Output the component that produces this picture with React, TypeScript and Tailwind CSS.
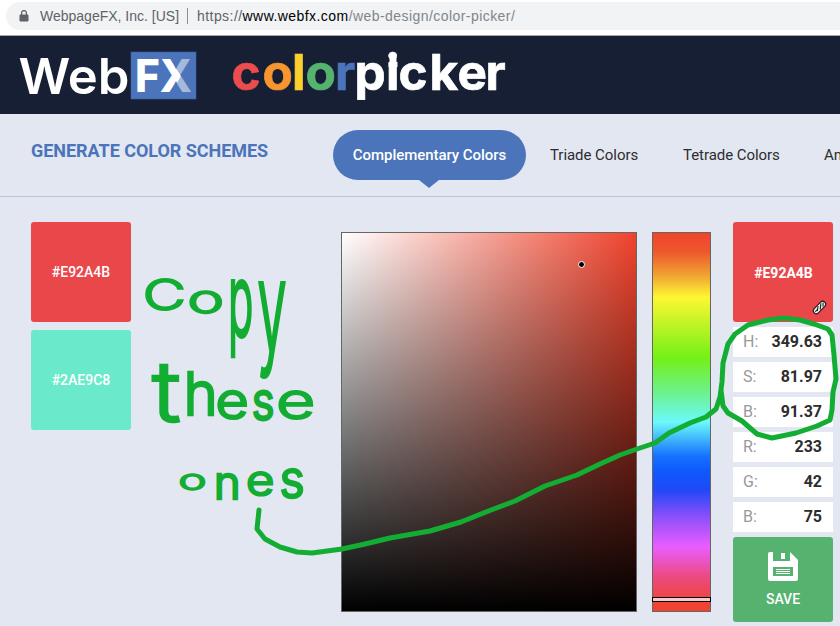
import React from "react";

type Box = [number, number, number, number];

// Ink bounds of each letter in em: left, right, height above baseline, depth below it.
const glyphs: Record<string, Box> = {
  C: [0.07, 0.66, 0.735, -0.01],
  o: [0.06, 0.54, 0.55, -0.01],
  p: [0.09, 0.55, 0.55, -0.2],
  y: [0.03, 0.51, 0.54, -0.2],
  t: [0.02, 0.3, 0.67, -0.0],
  h: [0.09, 0.49, 0.74, 0],
  e: [0.06, 0.53, 0.55, -0.01],
  s: [0.05, 0.46, 0.55, -0.01],
  n: [0.09, 0.49, 0.55, 0],
};

// Each letter with the area it fills: left, right, top, bottom.
const notes: [string, Box][][] = [
  [
    ["C", [147, 182, 280, 311]],
    ["o", [191, 221, 292, 314]],
    ["p", [232, 251, 281, 356]],
    ["y", [259, 284, 284, 376]],
  ],
  [
    ["t", [154, 181, 365, 422]],
    ["h", [189, 212, 371, 415]],
    ["e", [219, 246, 391, 419]],
    ["s", [254, 272, 391, 420]],
    ["e", [280, 312, 391, 419]],
  ],
  [
    ["o", [181, 204, 474, 490]],
    ["n", [218, 236, 474, 499]],
    ["e", [249, 272, 473, 496]],
    ["s", [282, 302, 469, 498]],
  ],
];

function Letter({ ch, box }: { ch: string; box: Box }) {
  const g = glyphs[ch];
  const size = 50;
  const base = 43.2;
  const sx = (box[1] - box[0]) / ((g[1] - g[0]) * size);
  const sy = (box[3] - box[2]) / ((g[2] - g[3]) * size);
  const x = box[0] - g[0] * size * sx;
  const y = box[2] + g[2] * size * sy - base;
  return (
    <span
      className="inline-block w-0 overflow-visible"
      style={{
        transformOrigin: `0 ${base}px`,
        transform: `translate(${x}px, ${y}px) scale(${sx}, ${sy})`,
        WebkitTextStrokeWidth: `${2.6 / Math.max(sx, Math.sqrt(sx * sy))}px`,
      }}
    >
      {ch}
    </span>
  );
}

function Logo() {
  return (
    <svg width="500" height="77" viewBox="15 36 500 77" className="ml-[15px]" fontFamily="Inter, sans-serif">
      <text x="18.5" y="94" fontSize="50" fontWeight="600" fill="#fff" textLength="111" lengthAdjust="spacingAndGlyphs">Web</text>
      <rect x="131" y="52" width="65" height="47" fill="#4b74ba" stroke="#3a62a8" strokeWidth="0.6" />
      <text x="135" y="92.3" fontSize="45" fontWeight="800" fill="#fff" textLength="57" lengthAdjust="spacingAndGlyphs">FX</text>
      <polygon points="170,59 181,76 171,93 195,93 195,59" fill="#4b74ba" opacity="0.5" />
      <text y="90.2" fontSize="49.5" fontWeight="700" strokeWidth="0.7" x="231.5 262.5 292 305.5 335 354.5 386 398.5 429.5 457.5 485.5">
        <tspan fill="#ec4c4e" stroke="#ec4c4e">c</tspan>
        <tspan fill="#f7952f" stroke="#f7952f">o</tspan>
        <tspan fill="#fbd02e" stroke="#fbd02e">l</tspan>
        <tspan fill="#55b36f" stroke="#55b36f">o</tspan>
        <tspan fill="#4b74ba" stroke="#4b74ba">r</tspan>
        <tspan fill="#fff" stroke="#fff">picker</tspan>
      </text>
      <path d="M389.5 65v-6q0-4 3.5-4t3.5 4v3h1v5h-9v-5h1z" fill="#fff" />
    </svg>
  );
}

function Swatch({ color, label, bold }: { color: string; label: string; bold?: boolean }) {
  return (
    <div
      className={`flex h-[100px] w-[100px] shrink-0 items-center justify-center rounded-[3px] text-[14px] text-white ${bold ? "pl-px pt-[2px] font-bold" : "font-medium"}`}
      style={{ backgroundColor: color }}
    >
      {label}
    </div>
  );
}

const values = [
  ["H:", "349.63"],
  ["S:", "81.97"],
  ["B:", "91.37"],
  ["R:", "233"],
  ["G:", "42"],
  ["B:", "75"],
];

export default function App() {
  return (
    <div className="relative flex h-[626px] w-[840px] flex-col overflow-hidden bg-[#e3e7f2] font-['Roboto',sans-serif]">
      <div className="h-9 border-b border-[#a6a8ac] bg-white pl-[6px] pt-[2px]">
        <div className="flex h-7 w-[860px] items-center rounded-full bg-[#f1f3f4] pl-[13px] font-['Liberation_Sans',sans-serif] text-[14px] text-[#5f6368]">
          <svg width="10" height="12" viewBox="0 0 10 12">
            <path d="M1 5h8v6H1z" fill="#5f6368" stroke="#5f6368" strokeLinejoin="round" />
            <path d="M2.6 5V3a2.4 2.4 0 0 1 4.8 0v2" fill="none" stroke="#5f6368" strokeWidth="1.3" />
          </svg>
          <span className="ml-[11px] w-[140px] whitespace-nowrap">WebpageFX, Inc. [US]</span>
          <span className="ml-[7px] h-4 w-px bg-[#8b8e92]" />
          <span className="ml-[9px] whitespace-nowrap tracking-[0.44px]">
            https://<span className="text-black">www.webfx.com</span>
            <span className="text-[#80868b]">/web-design/color-picker/</span>
          </span>
        </div>
      </div>

      <header className="h-[78px] shrink-0 bg-[#161f33]">
        <Logo />
      </header>

      <nav className="flex h-[83px] shrink-0 border-b border-[#bdc4d6] pl-[31px] pt-4">
        <h1 className="w-[302px] shrink-0 whitespace-nowrap pt-[7px] text-[18px] font-bold leading-7 tracking-[-0.04px] text-[#4b74ba]">GENERATE COLOR SCHEMES</h1>
        <div className="flex w-[193px] shrink-0 flex-col items-center">
          <div className="flex h-[50px] w-[193px] items-center justify-center whitespace-nowrap rounded-full bg-[#4b74ba] text-[15px] font-medium tracking-[-0.05px] text-white">
            Complementary Colors
          </div>
          <svg width="20" height="8" viewBox="0 0 20 8" className="mr-px">
            <path d="M0 0h20L10 8z" fill="#4b74ba" />
          </svg>
        </div>
        <div className="ml-6 flex h-[50px] items-center whitespace-nowrap text-[15px] tracking-[-0.05px] text-[#2d2d2d]">
          <span className="w-[133px]">Triade Colors</span>
          <span className="w-[141px]">Tetrade Colors</span>
          <span>Analogous Colors</span>
        </div>
      </nav>

      <main className="flex flex-1 items-start pl-[31px] pt-[25px]">
        <div className="flex flex-col gap-2">
          <Swatch color="#ea474b" label="#E92A4B" />
          <Swatch color="#6aeaca" label="#2AE9C8" />
        </div>
        <div className="ml-[210px] mt-[10px] h-[380px] w-[296px] shrink-0 border border-[#666] bg-[linear-gradient(to_top,#000,transparent),linear-gradient(to_right,#fff,#ef432c)]">
          <div className="ml-[236px] mt-[28px] h-[7px] w-[7px] rounded-full border border-white bg-black" />
        </div>
        <div className="ml-[15px] mt-[10px] h-[380px] w-[59px] shrink-0 border border-[#666] bg-[linear-gradient(to_bottom,#ef432c_0%,#ed582d_5%,#f0a032_11%,#fdf733_17%,#74f016_33%,#6cf28a_42%,#6cf9fb_50%,#1672ff_59%,#0e59fb_63%,#2148f7_68%,#9150fa_75.5%,#e95dff_83%,#ec4a80_91%,#ee4435_98%,#ef432c_100%)] pt-[364px]">
          <div className="-ml-px h-[5px] w-[59px] border border-black bg-[#f9c9d2]" />
        </div>
        <div className="ml-[22px] flex w-[100px] shrink-0 flex-col gap-[5px]">
          <Swatch color="#ea474b" label="#E92A4B" bold />
          {values.map(([name, value], i) => (
            <div key={i} className="flex h-[30px] items-center justify-between bg-white pl-[10px] pr-[11px] text-[16px]">
              <span className="text-[#999]">{name}</span>
              <span className="font-bold text-[#2d2d2d]">{value}</span>
            </div>
          ))}
          <div className="flex h-[85px] flex-col items-center rounded-[3px] bg-[#55b36f] pt-[15px] text-[14px] font-medium text-white">
            <svg width="30" height="29" viewBox="0 0 30 29">
              <path fillRule="evenodd" fill="#fff" d="M2 0h3v9h17V0l8 8v19q0 2-2 2H2q-2 0-2-2V2Q0 0 2 0zM5 15v9h20v-9z" />
              <path d="M13 1h4v6h-4z" fill="#fff" />
              <path d="M8 17.5h14M8 19.5h14M8 21.5h14" stroke="#fff" strokeWidth="1.2" />
            </svg>
            <span className="mt-2 leading-5">SAVE</span>
          </div>
        </div>
      </main>

      <div className="absolute left-0 top-0 font-['Inter',sans-serif] text-[50px] font-light leading-[50px] text-[#12ad32] [-webkit-text-stroke-color:#12ad32]">
        {notes.map((word, i) => (
          <div key={i} className="absolute left-0 top-0 whitespace-nowrap">
            {word.map(([ch, box], j) => (
              <Letter key={j} ch={ch} box={box} />
            ))}
          </div>
        ))}
      </div>

      <svg className="absolute left-0 top-0" width="840" height="626" viewBox="0 0 840 626" fill="none">
        <g stroke="#12ad32" strokeWidth="5" strokeLinecap="round" strokeLinejoin="round">
          <path d="M259 510L257 529L265 539L280 547L297 552L312 553L342 549L365 544L390 538L430 531L461 522L491 510L515 501L545 486L577 475L600 464L620 455L637 449L655 443L669 433L690 423L706 417L716 409L720 397L722 382L723 363L728 344L735 334L748 325L768 320L784 318L800 320L814 324L828 329L832 335L834 355L836 379L833 392L832 410L830 420L817 426L796 433L772 438L757 434L742 421L728 413L723 406L721 390" />
        </g>
        <g transform="translate(819.5 307.5) rotate(-45)" stroke="#171717">
          <rect x="-7.5" y="-3" width="15" height="6" rx="3" fill="#e8e8e8" />
          <path d="M-4 1L0-2M-1 2L4-2M3 2L6-1M-6 0H-3" />
        </g>
      </svg>
    </div>
  );
}
